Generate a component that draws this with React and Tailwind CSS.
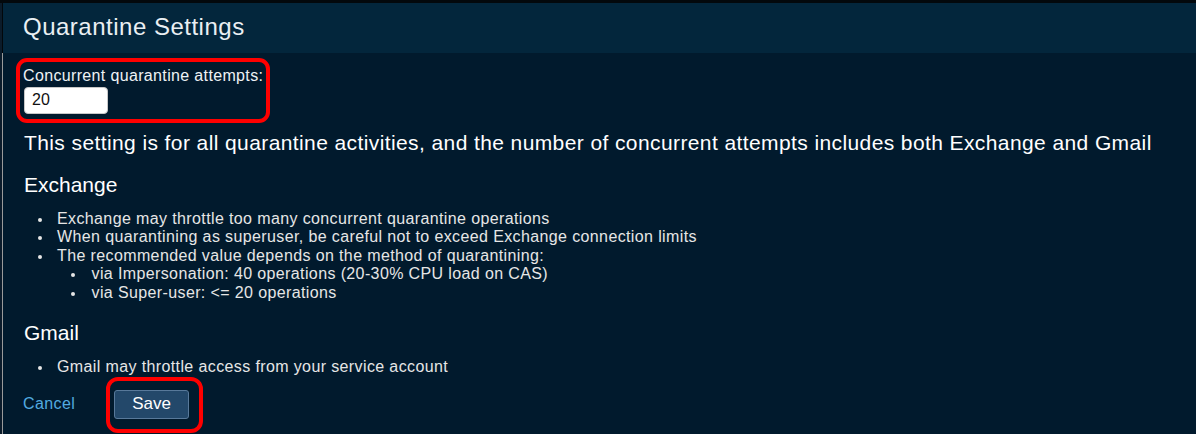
import React from "react";

const Bullet = ({ children, level = 1 }) => (
  <li
    className={
      "flex items-start " + (level === 1 ? "ml-[14px]" : "ml-[46.5px]")
    }
  >
    <span
      className={
        "mt-[8px] h-[4px] w-[4px] shrink-0 rounded-full bg-[#e6e6e6] " +
        (level === 1 ? "mr-[15px]" : "mr-[17px]")
      }
    />
    <span className="whitespace-nowrap">{children}</span>
  </li>
);

const App = () => {
  return (
    <div
      className="flex h-[434px] w-[1196px] overflow-hidden bg-[#03080c] pt-[3px]"
      style={{ fontFamily: '"Liberation Sans", Arial, sans-serif' }}
    >
      {/* Bord gauche */}
      <div className="w-[2px] bg-[#0b1b2a]" />

      <div className="flex flex-1 flex-col">
        {/* En-tete */}
        <div className="h-[50px] shrink-0 border-l border-[#02070b] bg-[#03263c] pl-[20px] pt-[11.5px]">
          <h1 className="text-[24px] leading-[24px] tracking-[0.5px] text-[#eaeff3]">
            Quarantine Settings
          </h1>
        </div>

        {/* Contenu */}
        <div className="flex-1 border-l border-[#9a9a9a] bg-[#011a2d] pl-[21px] pt-[5px] text-white">
          <div className="ml-[-8px] h-[65px] w-[254px] rounded-[11px] border-4 border-[#ff0000] pl-[3px] pt-[5.5px]">
            <label className="block whitespace-nowrap text-[16px] leading-[16px] tracking-[0.35px] text-[#eef2f5]">
              Concurrent quarantine attempts:
            </label>
            <div className="mt-[3px] ml-[1px] flex h-[27px] w-[84px] items-center rounded-[4px] border border-[#c8c8c8] bg-white pl-[7px] text-[16px] text-[#111]">
              20
            </div>
          </div>

          <p className="mt-[8.5px] whitespace-nowrap text-[21px] leading-[21px] tracking-[0.4px]">
            This setting is for all quarantine activities, and the number of concurrent attempts includes both Exchange and Gmail
          </p>

          <h2 className="mt-[21.5px] text-[21px] leading-[21px]">Exchange</h2>

          <ul className="mt-[14.7px] text-[16px] leading-[18.5px] tracking-[0.38px] text-[#e6e6e6]">
            <Bullet>Exchange may throttle too many concurrent quarantine operations</Bullet>
            <Bullet>When quarantining as superuser, be careful not to exceed Exchange connection limits</Bullet>
            <Bullet>The recommended value depends on the method of quarantining:</Bullet>
            <Bullet level={2}>via Impersonation: 40 operations (20-30% CPU load on CAS)</Bullet>
            <Bullet level={2}>via Super-user: &lt;= 20 operations</Bullet>
          </ul>

          <h2 className="mt-[20px] text-[21px] leading-[21px]">Gmail</h2>

          <ul className="mt-[14.5px] text-[16px] leading-[18.5px] tracking-[0.38px] text-[#e6e6e6]">
            <Bullet>Gmail may throttle access from your service account</Bullet>
          </ul>

          {/* Actions */}
          <div className="ml-[-1px] mt-[0.5px] flex items-start">
            <a className="mt-[19.5px] w-[83px] cursor-pointer text-[16px] leading-[16px] tracking-[0.4px] text-[#52abe0]">
              Cancel
            </a>
            <div className="h-[56px] w-[97px] shrink-0 rounded-[12px] border-4 border-[#ff0000] pl-[4px] pt-[9px]">
              <button className="flex h-[29px] w-[75px] items-center justify-center rounded-[3px] border border-[#58799a] bg-[#23486a] text-[17px] text-white">
                Save
              </button>
            </div>
          </div>
        </div>
      </div>
    </div>
  );
};

export default App;
